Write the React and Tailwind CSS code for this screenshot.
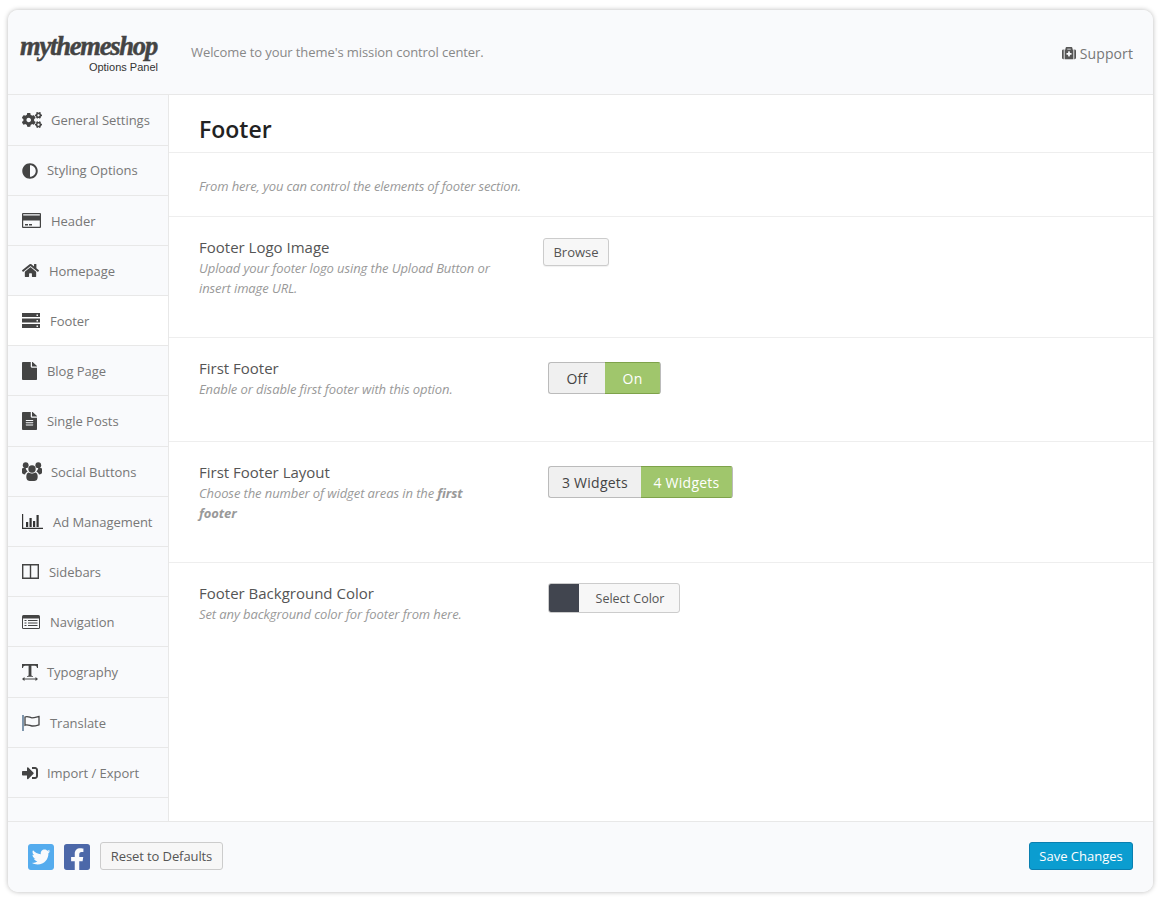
import {
  FaCogs,
  FaAdjust,
  FaHome,
  FaFile,
  FaFileAlt,
  FaSignInAlt,
  FaMedkit,
  FaTwitterSquare,
  FaFacebookSquare,
} from "react-icons/fa";

const CardIcon = () => (
  <svg viewBox="0 0 19 15" className="w-[19px] h-[15px]" fill="#444">
    <path fillRule="evenodd" d="M1 0h17a1 1 0 0 1 1 1v13a1 1 0 0 1-1 1H1a1 1 0 0 1-1-1V1a1 1 0 0 1 1-1zm.2 7.5v6.3h16.6V7.5zM1.2 1.2v1.4h16.6V1.2z" />
    <path d="M3 11h3v1.5H3zM7 11h3v1.5H7z" />
  </svg>
);

const ServerIcon = () => (
  <svg viewBox="0 0 18 15" className="w-[18px] h-[15px]">
    <path d="M0 0h18v4H0zM0 5.5h18v4H0zM0 11h18v4H0z" fill="#444" />
    <path d="M14.5 1.5h1.5V3h-1.5zM14.5 7h1.5v1.5h-1.5zM14.5 12.5h1.5V14h-1.5z" fill="#f4f4f4" />
  </svg>
);

const UsersIcon = () => (
  <svg viewBox="0 0 20 19" className="w-[20px] h-[19px]" fill="#444">
    <circle cx="3.7" cy="3.2" r="2.9" />
    <circle cx="16.3" cy="3.2" r="2.9" />
    <circle cx="10" cy="7" r="3.7" />
    <path d="M0 7c0-1 1-1.3 3.7-1 .3 1.500 1 2.700 2 3.500C4.500 10 3.500 11 3 12.500 1 12.200 0 11.500 0 10.500zM20 7c0-1-1-1.300-3.700-1-.3 1.500-1 2.700-2 3.500 1.200.5 2.200 1.500 2.700 3 2-.3 3-1 3-2z" />
    <path d="M4.500 13c.3-1.500 1.200-2.500 2.300-2.500C8 11.300 9 11.600 10 11.600s2-.3 3.200-1.100c1.100 0 2 1 2.300 2.500.3 1.500.3 3-.3 4.300-.5 1-1.500 1.700-3 1.700H7.800c-1.500 0-2.500-.7-3-1.700-.6-1.300-.6-2.800-.3-4.300z" />
  </svg>
);

const ChartIcon = () => (
  <svg viewBox="0 0 21 15" className="w-[21px] h-[15px]" fill="#333">
    <path d="M0 0h1.200v13.800H21V15H0z" />
    <path d="M4 8h2.200v5H4zM7.500 4h2.200v9H7.500zM11 7h2.200v6H11zM14.500 1h2.200v12h-2.200z" />
  </svg>
);

const ColumnsIcon = () => (
  <svg viewBox="0 0 17 15" className="w-[17px] h-[15px]" fill="none" stroke="#444" strokeWidth="1.4">
    <path d="M.7.7h15.600v13.600H.7zM8.500.7v13.600" />
  </svg>
);

const NavIcon = () => (
  <svg viewBox="0 0 18 14" className="w-[18px] h-[14px]">
    <rect width="18" height="14" rx="1.500" fill="#444" />
    <rect x="1" y="3.500" width="16" height="9.500" fill="#f9fafc" />
    <path d="M2.500 5h2v1h-2zM2.500 7.500h2v1h-2zM2.500 10h2v1h-2zM6 5h9.500v1H6zM6 7.500h9.500v1H6zM6 10h9.500v1H6z" fill="#444" />
  </svg>
);

const TypeIcon = () => (
  <svg viewBox="0 0 16 17" className="w-[16px] h-[17px]" fill="#444">
    <path d="M0 0h16v4h-1c-.2-1.600-.8-2.300-2-2.300H9.400v9.200c0 .7.4 1 1.600 1.100v.8H5v-.8c1.200-.1 1.600-.4 1.600-1.100V1.700H3C1.800 1.700 1.200 2.400 1 4H0z" />
    <path d="M0 15l2.500-2v1.500h11V13l2.500 2-2.500 2v-1.500h-11V17z" />
  </svg>
);

const FlagIcon = () => (
  <svg viewBox="0 0 18 16" className="w-[18px] h-[16px]" fill="none">
    <path d="M1 0v16" stroke="#4a6a8a" strokeWidth="1.400" />
    <path d="M3 2c3-1.500 5 .8 7 .8 2 0 4-.6 7-1.300v8.300c-3 .9-5 1.300-7 1.200-2 0-4-2-7-.8z" stroke="#444" strokeWidth="1.300" />
  </svg>
);

const NAV = [
  { label: "General Settings", icon: <FaCogs className="w-[20px] h-[18px]" />, box: "w-[29px]", h: "h-[51px]", pad: "pt-[2px]" },
  { label: "Styling Options", icon: <FaAdjust className="w-[16px] h-[16px]" />, box: "w-[25px]", h: "h-[50px]", pad: "" },
  { label: "Header", icon: <CardIcon />, box: "w-[29px]", h: "h-[50px]", pad: "pt-[2px]" },
  { label: "Homepage", icon: <FaHome className="w-[17px] h-[15px]" preserveAspectRatio="none" />, box: "w-[27px]", h: "h-[50px]", pad: "pt-[2px]" },
  { label: "Footer", icon: <ServerIcon />, box: "w-[28px]", h: "h-[50px]", pad: "pt-[2px]", active: true },
  { label: "Blog Page", icon: <FaFile className="w-[15px] h-[18px]" preserveAspectRatio="none" />, box: "w-[25px]", h: "h-[50px]", pad: "pt-[2px]" },
  { label: "Single Posts", icon: <FaFileAlt className="w-[15px] h-[18px]" preserveAspectRatio="none" />, box: "w-[25px]", h: "h-[51px]", pad: "pt-[2px]" },
  { label: "Social Buttons", icon: <UsersIcon />, box: "w-[29px]", h: "h-[50px]", pad: "pt-[2px]" },
  { label: "Ad Management", icon: <ChartIcon />, box: "w-[31px]", h: "h-[50px]", pad: "pt-[2px]" },
  { label: "Sidebars", icon: <ColumnsIcon />, box: "w-[27px]", h: "h-[50px]", pad: "pt-[2px]" },
  { label: "Navigation", icon: <NavIcon />, box: "w-[28px]", h: "h-[50px]", pad: "pt-[2px]" },
  { label: "Typography", icon: <TypeIcon />, box: "w-[25px]", h: "h-[51px]", pad: "pt-[2px]" },
  { label: "Translate", icon: <FlagIcon />, box: "w-[28px]", h: "h-[50px]", pad: "pt-[2px]" },
  { label: "Import / Export", icon: <FaSignInAlt className="w-[16px] h-[16px]" />, box: "w-[25px]", h: "h-[50px]", pad: "pt-[2px]" },
];

const SegButton = ({ left, right, leftW, rightW }) => (
  <div className="flex h-[32px] text-[14px] font-medium tracking-[0.25px]">
    <div className={`${leftW} flex items-center justify-center bg-[#f0f0f0] text-[#444] border border-[#bbbbbb] border-r-0 rounded-l-[3px]`}>
      {left}
    </div>
    <div className={`${rightW} flex items-center justify-center bg-[#a0c66c] text-white border-y border-y-[#7ea24a] border-r border-r-[#bbbbbb] rounded-r-[3px]`}>
      {right}
    </div>
  </div>
);

const Label = ({ title, children }) => (
  <div className="w-[299px] pt-[19px]">
    <div className="text-[15px] leading-[22px] text-[#555]">{title}</div>
    <div className="text-[13px] leading-[20px] italic tracking-[-0.1px] text-[#999]">{children}</div>
  </div>
);

const Row = ({ title, className, control, children }) => (
  <div className={`flex border-b border-[#eeeeee] px-[30px] ${className}`}>
    <Label title={title}>{children}</Label>
    {control}
  </div>
);

export default function App() {
  return (
    <div className="min-h-[901px] bg-white pt-[10px] pl-[8px] font-['Open_Sans',sans-serif]">
      <div className="w-[1145px] h-[882px] flex flex-col bg-white rounded-[10px] shadow-[0_0_5px_rgba(0,0,0,0.28)] overflow-hidden">
        <header className="h-[85px] shrink-0 flex items-center bg-[#f9fafc] border-b border-[#e8e8e8] pl-[12px] pr-[20px] pt-[2px]">
          <div className="w-[139px] mr-[32px] flex flex-col items-end">
            <div className="w-full text-[26.5px] leading-[26px] font-bold italic tracking-[-1.2px] text-[#444] font-['Liberation_Serif',serif] whitespace-nowrap [-webkit-text-stroke:0.5px_#444]">
              mythemeshop
            </div>
            <div className="mt-[1px] pr-[1px] text-[11px] leading-[14px] text-[#333] font-['Liberation_Sans',sans-serif]">Options Panel</div>
          </div>
          <p className="text-[13px] tracking-[-0.085px] text-[#888]">Welcome to your theme's mission control center.</p>
          <div className="ml-auto flex items-center gap-[4px] text-[14px] tracking-[0.1px] text-[#777]">
            <FaMedkit className="w-[14px] h-[14px] text-[#555]" />
            Support
          </div>
        </header>

        <div className="flex-1 flex min-h-0">
          <nav className="w-[161px] shrink-0 bg-[#f9fafc] border-r border-[#e8e8e8]">
            {NAV.map((item) => (
              <div
                key={item.label}
                className={`${item.h} flex items-center pl-[14px] border-b border-[#e8e8e8] text-[13px] tracking-[-0.04px] text-[#777] ${item.active ? "bg-white" : ""}`}
              >
                <span className={`${item.box} shrink-0 flex items-center text-[#444]`}>{item.icon}</span>
                <span className={item.pad}>{item.label}</span>
              </div>
            ))}
          </nav>

          <main className="flex-1 min-w-0">
            <div className="h-[58px] flex items-center px-[30px] pt-[12px] border-b border-[#eeeeee]">
              <h1 className="text-[23px] font-semibold text-[#222]">Footer</h1>
            </div>
            <div className="h-[64px] flex items-center px-[30px] pt-[4px] border-b border-[#eeeeee] text-[13px] italic tracking-[-0.15px] text-[#999]">
              From here, you can control the elements of footer section.
            </div>

            <Row
              title="Footer Logo Image"
              className="h-[121px]"
              control={
                <div className="mt-[21px] ml-[45px] h-[28px] w-[66px] flex items-center justify-center pt-[1px] bg-[#f7f7f7] border border-[#cccccc] rounded-[3px] text-[13px] text-[#555] shadow-[0_1px_1px_rgba(0,0,0,0.06)]">
                  Browse
                </div>
              }
            >
              Upload your footer logo using the Upload Button or
              <br />
              insert image URL.
            </Row>

            <Row
              title="First Footer"
              className="h-[104px]"
              control={
                <div className="mt-[24px] ml-[50px]">
                  <SegButton left="Off" right="On" leftW="w-[57px]" rightW="w-[56px]" />
                </div>
              }
            >
              Enable or disable first footer with this option.
            </Row>

            <Row
              title="First Footer Layout"
              className="h-[121px]"
              control={
                <div className="mt-[24px] ml-[50px]">
                  <SegButton left="3 Widgets" right="4 Widgets" leftW="w-[93px]" rightW="w-[92px]" />
                </div>
              }
            >
              Choose the number of widget areas in the <b>first</b>
              <br />
              <b>footer</b>
            </Row>

            <div className="flex px-[30px]">
              <Label title="Footer Background Color">Set any background color for footer from here.</Label>
              <div className="mt-[20px] ml-[50px] h-[30px] w-[132px] flex bg-[#f7f7f7] border border-[#cccccc] rounded-[3px] overflow-hidden text-[12.5px] text-[#555]">
                <span className="w-[30px] bg-[#41454f]" />
                <span className="flex-1 flex items-center justify-center pt-[2px] pl-[2px]">Select Color</span>
              </div>
            </div>
          </main>
        </div>

        <footer className="h-[71px] shrink-0 flex items-center bg-[#f9fafc] border-t border-[#e8e8e8] pl-[20px] pr-[20px] pb-[2px]">
          <FaTwitterSquare className="w-[26px] h-[30px] mt-[2px] text-[#55acee]" />
          <FaFacebookSquare className="w-[26px] h-[30px] mt-[2px] ml-[10px] text-[#4c68a9]" />
          <div className="ml-[10px] h-[28px] w-[123px] flex items-center justify-center pt-[2px] bg-[#f7f7f7] border border-[#cccccc] rounded-[3px] text-[13px] tracking-[-0.1px] text-[#555]">
            Reset to Defaults
          </div>
          <div className="ml-auto h-[28px] w-[104px] flex items-center justify-center pt-[2px] bg-[#0b9dd0] border border-[#0a7fb0] rounded-[3px] text-[13px] text-white">
            Save Changes
          </div>
        </footer>
      </div>
    </div>
  );
}
